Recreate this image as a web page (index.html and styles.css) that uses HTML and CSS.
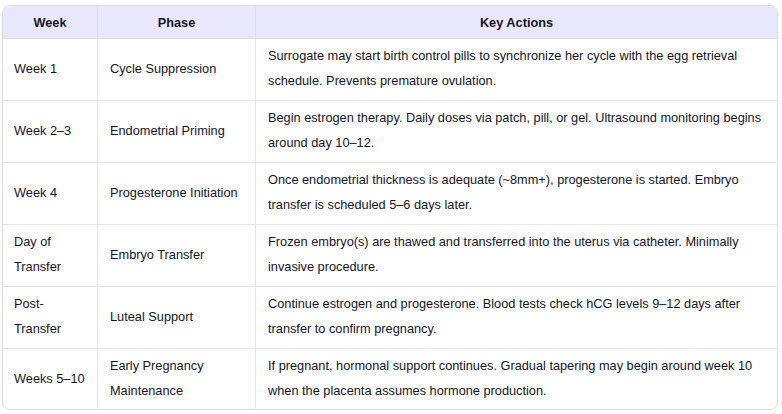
FILE: index.html
```html
<!DOCTYPE html>
<html lang="en">
<head>
<meta charset="utf-8">
<title>Protocol Timeline</title>
<link rel="stylesheet" href="styles.css">
</head>
<body>
<div class="wrap">
  <table class="plan">
    <colgroup>
      <col class="c-week">
      <col class="c-phase">
      <col class="c-actions">
    </colgroup>
    <thead>
      <tr><th>Week</th><th>Phase</th><th>Key Actions</th></tr>
    </thead>
    <tbody>
      <tr><td>Week 1</td><td>Cycle Suppression</td><td>Surrogate may start birth control pills to synchronize her cycle with the egg retrieval schedule. Prevents premature ovulation.</td></tr>
      <tr><td>Week 2–3</td><td>Endometrial Priming</td><td>Begin estrogen therapy. Daily doses via patch, pill, or gel. Ultrasound monitoring begins around day 10–12.</td></tr>
      <tr><td>Week 4</td><td>Progesterone Initiation</td><td>Once endometrial thickness is adequate (~8mm+), progesterone is started. Embryo transfer is scheduled 5–6 days later.</td></tr>
      <tr><td>Day of Transfer</td><td>Embryo Transfer</td><td>Frozen embryo(s) are thawed and transferred into the uterus via catheter. Minimally invasive procedure.</td></tr>
      <tr><td>Post-Transfer</td><td>Luteal Support</td><td>Continue estrogen and progesterone. Blood tests check hCG levels 9–12 days after transfer to confirm pregnancy.</td></tr>
      <tr><td>Weeks 5–10</td><td>Early Pregnancy Maintenance</td><td>If pregnant, hormonal support continues. Gradual tapering may begin around week 10 when the placenta assumes hormone production.</td></tr>
    </tbody>
  </table>
</div>
</body>
</html>
```

FILE: styles.css
```css
html, body {
  margin: 0;
  padding: 0;
  background: #ffffff;
}

body {
  padding: 5px 4px 0 2px;
  font-family: "Liberation Sans", Arial, sans-serif;
  font-size: 12.75px;
  color: #16162a;
}

.wrap {
  border: 1px solid #dddbee;
  border-radius: 8px;
  overflow: hidden;
}

.plan {
  width: 100%;
  border-collapse: separate;
  border-spacing: 0;
  table-layout: fixed;
}

.c-week { width: 94px; }
.c-phase { width: 158px; }
.c-actions { width: auto; }

.plan th {
  background: #e9e7fb;
  font-weight: bold;
  text-align: center;
  height: 32px;
  padding: 0 10px;
  border-bottom: 1px solid #dddbee;
  border-left: 1px solid #dddbee;
}

.plan td {
  height: 62px;
  box-sizing: border-box;
  padding: 0 10px 3px 12px;
  line-height: 25px;
  vertical-align: middle;
  text-align: left;
  border-bottom: 1px solid #e4e4ec;
  border-left: 1px solid #e4e4ec;
}

.plan td:first-child {
  padding-left: 11px;
  padding-right: 10px;
}

.plan th:first-child,
.plan td:first-child {
  border-left: none;
}

.plan tbody tr:last-child td {
  border-bottom: none;
  height: 60px;
  padding-bottom: 2px;
}
```
